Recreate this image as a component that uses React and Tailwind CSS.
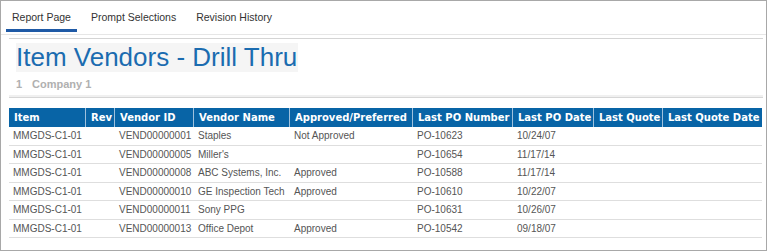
const columns = [
  { key: 'item', label: 'Item', w: 'w-[77px]' },
  { key: 'rev', label: 'Rev', w: 'w-[29px]' },
  { key: 'vendorId', label: 'Vendor ID', w: 'w-[79px]' },
  { key: 'vendorName', label: 'Vendor Name', w: 'w-[96px]' },
  { key: 'approved', label: 'Approved/Preferred', w: 'w-[123px]' },
  { key: 'poNumber', label: 'Last PO Number', w: 'w-[100px]' },
  { key: 'poDate', label: 'Last PO Date', w: 'w-[81px]' },
  { key: 'quote', label: 'Last Quote', w: 'w-[69px]' },
  { key: 'quoteDate', label: 'Last Quote Date', w: 'w-[99px]' },
];

const rows = [
  { item: 'MMGDS-C1-01', rev: '', vendorId: 'VEND00000001', vendorName: 'Staples', approved: 'Not Approved', poNumber: 'PO-10623', poDate: '10/24/07', quote: '', quoteDate: '' },
  { item: 'MMGDS-C1-01', rev: '', vendorId: 'VEND00000005', vendorName: "Miller's", approved: '', poNumber: 'PO-10654', poDate: '11/17/14', quote: '', quoteDate: '' },
  { item: 'MMGDS-C1-01', rev: '', vendorId: 'VEND00000008', vendorName: 'ABC Systems, Inc.', approved: 'Approved', poNumber: 'PO-10588', poDate: '11/17/14', quote: '', quoteDate: '' },
  { item: 'MMGDS-C1-01', rev: '', vendorId: 'VEND00000010', vendorName: 'GE Inspection Tech', approved: 'Approved', poNumber: 'PO-10610', poDate: '10/22/07', quote: '', quoteDate: '' },
  { item: 'MMGDS-C1-01', rev: '', vendorId: 'VEND00000011', vendorName: 'Sony PPG', approved: '', poNumber: 'PO-10631', poDate: '10/26/07', quote: '', quoteDate: '' },
  { item: 'MMGDS-C1-01', rev: '', vendorId: 'VEND00000013', vendorName: 'Office Depot', approved: 'Approved', poNumber: 'PO-10542', poDate: '09/18/07', quote: '', quoteDate: '' },
];

const tabs = ['Report Page', 'Prompt Selections', 'Revision History'];

function App() {
  return (
    <div className="w-[767px] h-[251px] bg-white border border-[#a8a8a8] overflow-hidden font-['Liberation_Sans',Arial,sans-serif]">
      <div className="h-[34px] flex items-start gap-[8px] pl-[5px] border-b border-[#e6e6e6]">
        {tabs.map((t, i) => (
          <div
            key={t}
            className={
              'h-[31px] px-[6px] pt-[10px] text-[10.5px] leading-[13px] text-[#333] ' +
              (i === 0 ? 'border-b-[3px] border-[#1f5aa6]' : '')
            }
          >
            {t}
          </div>
        ))}
      </div>
      <div className="pl-[8px] pr-[3px] pt-[3px]">
        <div className="border-t border-[#d4d4d4]">
          <div className="pl-[7px] pt-[4px]">
            <h1 className="inline-block bg-[#f5f5f5] h-[29px] pr-[1px] text-[26px] leading-[29px] text-[#1b6cb0]">
              Item Vendors - Drill Thru
            </h1>
            <div className="flex h-[22px] items-center text-[11px] font-bold text-[#b0b0b0]">
              <span className="w-[16px]">1</span>
              <span>Company 1</span>
            </div>
          </div>
          <div className="h-[3px] bg-[#f0f0f0] border-b border-[#d6d6d6]" />
          <div className="mt-[10px] w-[753px]">
            <div className="flex h-[19px] bg-[#0864a6] text-white font-['DejaVu_Sans',Verdana,sans-serif] font-bold text-[10px]">
              {columns.map((c, i) => (
                <div
                  key={c.key}
                  className={
                    c.w + ' flex items-center pl-[5px] whitespace-nowrap overflow-hidden ' +
                    (i < columns.length - 1 ? 'border-r border-[#9fc1dd]' : '')
                  }
                >
                  {c.label}
                </div>
              ))}
            </div>
            {rows.map((r, ri) => (
              <div key={ri} className="flex h-[18.5px] border-b border-[#dedede] text-[10px] text-[#555]">
                {columns.map((c) => (
                  <div key={c.key} className={c.w + ' flex items-center pl-[4px] whitespace-nowrap overflow-hidden'}>
                    {r[c.key]}
                  </div>
                ))}
              </div>
            ))}
          </div>
        </div>
      </div>
    </div>
  );
}

export default App;
